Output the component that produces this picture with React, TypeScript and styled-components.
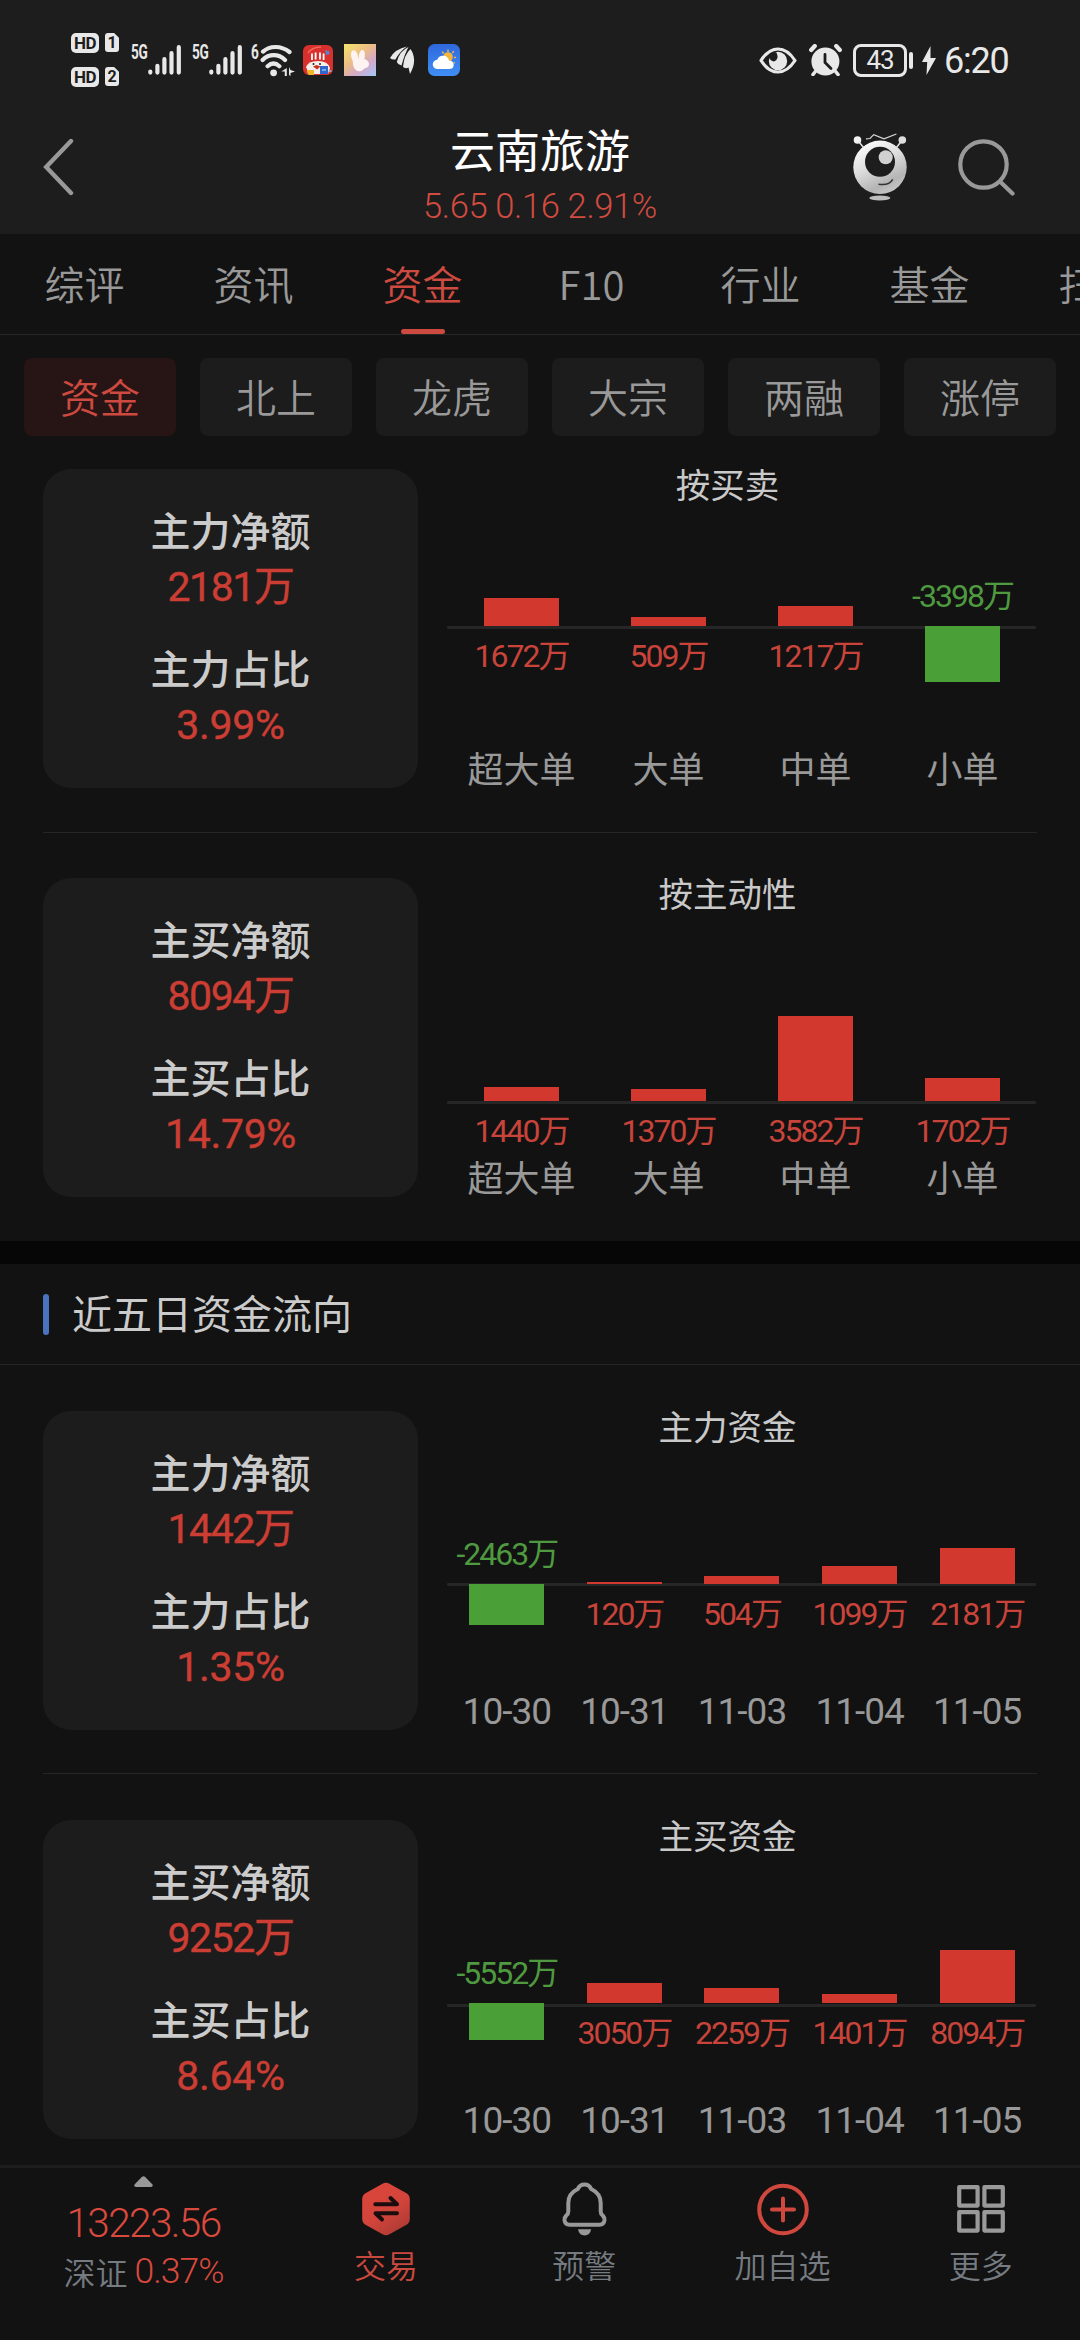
import React from "react";
import styled, { createGlobalStyle, css } from "styled-components";

const RED = "#d2382e";
const RED_SOFT = "#cd4a40";
const GREEN = "#4a9f37";
const GREY = "#999999";
const CJK = `"Noto Sans CJK SC", "Noto Sans", sans-serif`;
const NUM = `Roboto, "Noto Sans CJK SC", sans-serif`;

const GlobalStyle = createGlobalStyle`
  * { box-sizing: border-box; }
  body { margin: 0; background: #121212; }
  svg { display: block; flex: none; }
`;

const Screen = styled.main`
  width: 1080px;
  height: 2340px;
  overflow: hidden;
  display: flex;
  flex-direction: column;
  background: #121212;
  font-family: ${CJK};
  white-space: nowrap;
`;

/* ---------- status bar ---------- */

const StatusBar = styled.div`
  height: 120px;
  flex: none;
  display: flex;
  justify-content: space-between;
  padding: 0 72px 0 71px;
  background: #1d1d1d;
  color: #e8e8e8;
`;

const StatusGroup = styled.div`
  display: flex;
  align-items: center;
`;

const SimList = styled.div`
  display: flex;
  flex-direction: column;
  gap: 14px;
  width: 60px;
`;

const SimRow = styled.div`
  display: flex;
  gap: 6px;
  height: 20px;
`;

const Hd = styled.span`
  width: 28px;
  height: 20px;
  border-radius: 5px;
  background: #e8e8e8;
  color: #1d1d1d;
  font: 700 17px/21px ${NUM};
  letter-spacing: -0.5px;
  text-align: center;
`;

const Sim = styled.span`
  width: 14px;
  height: 19px;
  border-radius: 3px;
  clip-path: polygon(0 0, 65% 0, 100% 25%, 100% 100%, 0 100%);
  background: #e8e8e8;
  color: #1d1d1d;
  font: 700 16px/20px ${NUM};
  text-align: center;
`;

const NetLabel = styled.span<{ $w: number }>`
  width: ${(p) => p.$w}px;
  height: 32px;
  font: 700 20px/16px ${NUM};
  letter-spacing: -0.5px;
  & > span {
    display: block;
    transform: scaleX(0.68);
    transform-origin: left;
  }
`;

const IconSlot = styled.span<{ $left: number }>`
  margin-left: ${(p) => p.$left}px;
`;

const Battery = styled.span`
  width: 54px;
  height: 33px;
  margin-left: 11px;
  border: 3.5px solid #e8e8e8;
  border-radius: 8px;
  font: 400 26px/27px ${NUM};
  letter-spacing: -1px;
  text-align: center;
`;

const BatteryNub = styled.span`
  width: 4px;
  height: 17px;
  margin: 0 9px 0 2px;
  border-radius: 2px;
  background: #e8e8e8;
`;

const Clock = styled.span`
  margin-left: 8px;
  width: 64px;
  font: 400 36px/38px ${NUM};
  letter-spacing: -1.2px;
  padding-top: 2px;
`;

/* ---------- title bar ---------- */

const TitleBar = styled.header`
  height: 114px;
  flex: none;
  display: grid;
  grid-template-columns: 1fr auto 1fr;
  padding: 2px 65px 0 43px;
  background: #1d1d1d;
`;

const TitleSide = styled.div<{ $end?: boolean }>`
  height: 90px;
  display: flex;
  align-items: center;
  justify-content: ${(p) => (p.$end ? "flex-end" : "flex-start")};
  gap: 51px;
`;

const TitleBlock = styled.div`
  text-align: center;
  transform: translateX(11px);
`;

const StockName = styled.h1`
  margin: 0;
  font: 400 45px/53px ${CJK};
  color: #ffffff;
`;

const Quote = styled.div`
  font: 300 34.5px/62px ${NUM};
  height: 56px;
  letter-spacing: -0.35px;
  color: #d24b41;
`;

/* ---------- tabs ---------- */

const Tabs = styled.nav`
  height: 101px;
  flex: none;
  display: flex;
  border-bottom: 1px solid #262626;
  overflow: hidden;
`;

const Tab = styled.span<{ $active?: boolean }>`
  width: 169px;
  flex: none;
  display: flex;
  flex-direction: column;
  align-items: center;
  font: 350 40px/98px ${CJK};
  color: ${(p) => (p.$active ? RED_SOFT : GREY)};
  ${(p) =>
    p.$active &&
    css`
      &::after {
        content: "";
        width: 44px;
        height: 6px;
        margin-top: -3px;
        border-radius: 3px;
        background: ${RED_SOFT};
      }
    `}
`;

const Chips = styled.div`
  flex: none;
  display: flex;
  gap: 24px;
  padding: 23px 24px 33px;
`;

const Chip = styled.button<{ $active?: boolean }>`
  width: 152px;
  height: 78px;
  padding: 0 0 3px;
  border: 0;
  border-radius: 8px;
  background: ${(p) => (p.$active ? "#271414" : "#1c1c1c")};
  color: ${(p) => (p.$active ? RED_SOFT : GREY)};
  font: 350 40px/74px ${CJK};
`;

/* ---------- capital blocks ---------- */

const Block = styled.section<{ $bottom: number; $line?: boolean }>`
  flex: none;
  display: flex;
  margin: 0 43px;
  padding-bottom: ${(p) => p.$bottom}px;
  border-bottom: ${(p) => (p.$line ? "1px solid #262626" : "0")};
`;

const Spacer = styled.div<{ $h: number }>`
  flex: none;
  height: ${(p) => p.$h}px;
`;

const SummaryCard = styled.div`
  width: 375px;
  height: 319px;
  padding-top: 32px;
  border-radius: 28px;
  background: #1c1c1c;
  text-align: center;
`;

const SummaryName = styled.div`
  font: 500 40px/56px ${CJK};
  height: 55px;
  color: #cbcbcb;
`;

const SummaryValue = styled.div<{ $pct: boolean }>`
  margin-bottom: 28px;
  font: 400 41px/62px ${NUM};
  height: 55px;
  letter-spacing: ${(p) => (p.$pct ? "-0.3px" : "-1.4px")};
  -webkit-text-stroke: 0.4px #cc3d33;
  color: #cc3d33;
`;

const Chart = styled.div`
  flex: 1;
  height: 319px;
  display: flex;
  flex-direction: column;
`;

const ChartTitle = styled.h3`
  height: 32px;
  margin: 0;
  font: 400 34.5px/28px ${CJK};
  color: #c9c9c9;
  text-align: center;
`;

const Plot = styled.div<{ $base: number; $line: number }>`
  position: relative;
  height: 251px;
  margin: 0 1px 0 30px;
  display: flex;
  &::before {
    content: "";
    position: absolute;
    left: -1px;
    right: 0;
    top: ${(p) => p.$base + p.$line}px;
    height: 3px;
    border-radius: 1px;
    background: #262626;
  }
`;

const Column = styled.div<{ $base: number }>`
  position: relative;
  flex: 1 1 0;
  min-width: 0;
  display: grid;
  grid-template-rows: ${(p) => p.$base}px 1fr;
  justify-items: center;
`;

const Bar = styled.div<{ $down?: boolean }>`
  width: 75px;
  align-self: ${(p) => (p.$down ? "start" : "end")};
  background: ${(p) => (p.$down ? GREEN : RED)};
`;

const BarValue = styled.div<{ $down?: boolean }>`
  align-self: ${(p) => (p.$down ? "end" : "start")};
  margin: ${(p) => (p.$down ? "0 0 15px" : "15px 0 0")};
  font: 400 32px/30px ${NUM};
  letter-spacing: -2px;
  color: ${(p) => (p.$down ? "#4f9a40" : "#c8443a")};
`;

const Axis = styled.div`
  height: 36px;
  margin: 0 1px 0 30px;
  display: flex;
`;

const AxisLabel = styled.span<{ $date?: boolean }>`
  flex: 1 1 0;
  min-width: 0;
  text-align: center;
  color: ${GREY};
  font: ${(p) => (p.$date ? `400 37px/36px ${NUM}` : `400 36px/30px ${CJK}`)};
  letter-spacing: ${(p) => (p.$date ? "-1px" : "0")};
`;

const Band = styled.div`
  flex: none;
  height: 23px;
  background: #060606;
`;

const SectionHead = styled.header`
  flex: none;
  height: 101px;
  display: flex;
  align-items: center;
  gap: 23px;
  padding-left: 43px;
  border-bottom: 1px solid #262626;
`;

const Accent = styled.span`
  width: 6px;
  height: 41px;
  border-radius: 3px;
  background: #4a72bd;
`;

const SectionTitle = styled.h2`
  margin: 0;
  font: 400 40px/44px ${CJK};
  padding-bottom: 5px;
  color: #cbcbcb;
`;

/* ---------- bottom bar ---------- */

const BottomBar = styled.footer`
  flex: none;
  height: 175px;
  display: grid;
  grid-template-columns: 287px repeat(4, 1fr);
  border-top: 3px solid #1d1d1d;
  background: #121212;
`;

const IndexCell = styled.div`
  display: flex;
  flex-direction: column;
  align-items: center;
  padding-top: 8px;
`;

const IndexValue = styled.div`
  margin-top: 12px;
  font: 300 40.5px/48px ${NUM};
  letter-spacing: -1.6px;
  color: #d9493e;
`;

const IndexRow = styled.div`
  display: flex;
  align-items: center;
  gap: 7px;
  font: 350 32px/46px ${CJK};
  color: #757b80;
`;

const IndexPct = styled.span`
  font: 300 35.5px/48px ${NUM};
  letter-spacing: -1px;
  color: #d9493e;
`;

const Action = styled.div<{ $hot?: boolean }>`
  display: flex;
  flex-direction: column;
  align-items: center;
  font: 350 32px/40px ${CJK};
  color: ${(p) => (p.$hot ? "#c9493f" : "#757b80")};
`;

const ActionIcon = styled.span`
  height: 76px;
  padding-top: 14px;
  display: flex;
  align-items: flex-start;
`;

/* ---------- icons ---------- */

const Signal = () => (
  <svg width="34" height="32" viewBox="0 0 34 32" stroke="#e8e8e8" strokeWidth="4.2" strokeLinecap="round">
    <path d="M2.3 27.6v1M9.4 21.8v6.8M16.4 15.2v13.4M23.5 9.2v19.4M30.8 3.2v25.4" />
  </svg>
);

const Wifi = () => (
  <svg width="36" height="33" viewBox="0 0 36 33" fill="none" stroke="#e8e8e8" strokeWidth="4.2" strokeLinecap="round">
    <path d="M3 7.600C10 1.400 21 1.400 29.500 8M2.600 16C9 9.600 18.500 9.600 25 16M7.600 22.200c3.800-3.400 8-3.400 11.800 0" />
    <circle cx="13.600" cy="28.800" r="3.400" fill="#e8e8e8" stroke="none" />
    <path d="M26.800 24v8h-2v-4.500h-3.500zM29 23v8l1.500 1v-3l4.500-1.500-4.500-1.500z" fill="#e8e8e8" stroke="none" />
  </svg>
);

const SaleApp = () => (
  <svg width="30" height="30" viewBox="0 0 30 30">
    <rect width="30" height="30" rx="6" fill="#d8302c" />
    <path d="M5 8q4-6 13-6" fill="none" stroke="#f0685c" strokeWidth="1.400" />
    <path d="M3 22q2-6 12-6t12 7l-2 6H6z" fill="#f5efe9" />
    <path d="M9 8.500v6.500M12.600 7.500v7M17 7.500v7M20.600 8.500v6.500" stroke="#fff" strokeWidth="1.800" />
    <path d="M22.500 5.500l3.500 3.500M23 9.500l3-3" stroke="#4b8ad8" strokeWidth="1.800" />
    <path d="M10 21.500l3.500-1.500 4 1.500-3.400 3z" fill="#c93023" />
    <circle cx="10.500" cy="19" r="1" fill="#222" />
    <circle cx="17" cy="19" r="1" fill="#222" />
    <path d="M4 25h7v5H6q-2-1-2-5z" fill="#f3b52e" />
    <path d="M17 21h8v8h-8z" fill="#2f66cf" />
    <path d="M19 25h4M25.500 26h3" stroke="#86c5e8" strokeWidth="1.500" />
  </svg>
);

const RabbitApp = () => (
  <svg width="32" height="32" viewBox="0 0 32 32">
    <defs>
      <linearGradient id="rab" x1="0.100" y1="0" x2="0.900" y2="1">
        <stop offset="0" stopColor="#f3e06e" />
        <stop offset="0.400" stopColor="#ecbd85" />
        <stop offset="0.700" stopColor="#d3a9c9" />
        <stop offset="1" stopColor="#a8c3f2" />
      </linearGradient>
    </defs>
    <rect width="32" height="32" fill="url(#rab)" />
    <g fill="#fdf3f2">
      <ellipse cx="10.600" cy="12.500" rx="3.400" ry="6.500" transform="rotate(-14 10.600 12.500)" />
      <ellipse cx="17.800" cy="12" rx="3" ry="6" transform="rotate(8 17.800 12)" />
      <path d="M8.600 15q6-1 10.400-.5 6 1.500 6 5.500 0 3.500-4.500 4.500-3 3.500-7 2.500-3-1-4.500-6z" />
    </g>
  </svg>
);

const Feather = () => (
  <svg width="25" height="28" viewBox="0 0 25 28" fill="#e8e8e8">
    <path d="M0 12Q5 3 17 .5Q10 5 5.500 13.500Q2 14 0 12Z" />
    <path d="M6.800 16Q9.500 5 18.500 1Q15 7 11.500 19.500Q8 19 6.800 16Z" />
    <path d="M13 21Q14 9 20.500 3Q28 14 20 28L18.500 21.500Q15.500 23 13 21Z" />
  </svg>
);

const Weather = () => (
  <svg width="32" height="32" viewBox="0 0 32 32">
    <defs>
      <linearGradient id="wea" x1="0" y1="0" x2="0" y2="1">
        <stop offset="0" stopColor="#2e68dd" />
        <stop offset="1" stopColor="#3f8ff5" />
      </linearGradient>
    </defs>
    <rect width="32" height="32" rx="6.500" fill="url(#wea)" />
    <g stroke="#f3bd4e" strokeWidth="1.300" strokeLinecap="round">
      <path d="M20 6v1.500M14.500 8l.8 1M25.500 7.500l-.8 1M26.500 13.500h1M26 18.500l.5.400" />
    </g>
    <circle cx="20" cy="13" r="4.800" fill="#f5b53c" />
    <path d="M9.500 25a4.600 4.600 0 0 1-.3-9.200 6.200 6.200 0 0 1 11.800.6q4.700.5 4.700 4.400 0 4.200-4.500 4.200z" fill="#fff" />
  </svg>
);

const Eye = () => (
  <svg width="38" height="27" viewBox="0 0 38 27">
    <path d="M2 13.500Q9.500 2 19 2T36 13.500Q28.500 25 19 25T2 13.500Z" fill="none" stroke="#e8e8e8" strokeWidth="3.200" strokeLinejoin="round" />
    <circle cx="19" cy="14" r="9.200" fill="#e8e8e8" />
    <path d="M9.500 9Q14 3.500 17.500 5.500Q20.500 12.500 15 14.500Q11 14 9.500 9Z" fill="#1d1d1d" />
  </svg>
);

const Alarm = () => (
  <svg width="33" height="32" viewBox="0 0 33 32">
    <circle cx="16.400" cy="17.500" r="14" fill="#e8e8e8" />
    <path d="M2.200 6l3.600-4M30.800 6l-3.600-4" stroke="#e8e8e8" strokeWidth="4.200" strokeLinecap="round" />
    <path d="M6 28l-2 2.500M27 28l2 2.500" stroke="#e8e8e8" strokeWidth="3.600" strokeLinecap="round" />
    <path d="M16 10.500v8l6 6" fill="none" stroke="#1d1d1d" strokeWidth="2.800" strokeLinecap="round" />
  </svg>
);

const Bolt = () => (
  <svg width="14" height="29" viewBox="0 0 14 29">
    <path d="M8.500 0L0 16h5.200L4.500 29 14 12H8.500z" fill="#e8e8e8" />
  </svg>
);

const Back = () => (
  <svg width="32" height="58" viewBox="0 0 32 58" fill="none" stroke={GREY} strokeWidth="4.400" strokeLinecap="round" strokeLinejoin="miter">
    <path d="M28 3L3.200 29L28 55" />
  </svg>
);

const Robot = () => (
  <svg width="54" height="68" viewBox="0 0 54 68">
    <defs>
      <linearGradient id="bot" x1="0.200" y1="0" x2="0.700" y2="1">
        <stop offset="0" stopColor="#ffffff" />
        <stop offset="0.450" stopColor="#dcdcdc" />
        <stop offset="0.800" stopColor="#b4b4b4" />
        <stop offset="1" stopColor="#c8c8c8" />
      </linearGradient>
    </defs>
    <path d="M13 5.800L17 5.500L20.700 1.700L31 5.800L43.400 1" fill="none" stroke="#d8d8d8" strokeWidth="1.200" />
    <path d="M4.500 7L10.500 14.500M49.300 7L43.500 14.500" stroke="#dcdcdc" strokeWidth="1.600" />
    <circle cx="4.500" cy="7" r="3.800" fill="#f2f2f2" />
    <circle cx="49.300" cy="7" r="3.800" fill="#dedede" />
    <circle cx="27" cy="34.300" r="26.700" fill="url(#bot)" />
    <circle cx="27" cy="28.800" r="15" fill="#1d1d1d" />
    <circle cx="32.700" cy="24.200" r="7" fill="#d0d0d0" />
    <path d="M25.500 51.200Q36 53 39.700 46.300" fill="none" stroke="#333" strokeWidth="1.500" />
    <ellipse cx="26.800" cy="65" rx="10.500" ry="2.400" fill="#bdbdbd" />
  </svg>
);

const Search = () => (
  <svg width="57" height="57" viewBox="0 0 57 57" fill="none" stroke={GREY} strokeWidth="4.200" strokeLinecap="round">
    <circle cx="25.500" cy="25.500" r="23.200" />
    <path d="M42.500 43L54.500 54.500" />
  </svg>
);

const Caret = () => (
  <svg width="19" height="11" viewBox="0 0 19 11">
    <path d="M8 .8Q9.500-.4 11 .8L18.500 8.500Q19.300 11 17 11H2Q-.3 11 .5 8.500Z" fill={GREY} />
  </svg>
);

const Trade = () => (
  <svg width="48" height="54" viewBox="0 0 48 54">
    <defs>
      <linearGradient id="trd" x1="0.200" y1="0" x2="0.800" y2="1">
        <stop offset="0" stopColor="#dc453a" />
        <stop offset="0.550" stopColor="#d2443b" />
        <stop offset="1" stopColor="#a93a34" />
      </linearGradient>
    </defs>
    <path
      d="M20.500 1.700Q24 -.3 27.500 1.700L44.500 11.200Q47.800 13.200 47.800 17V37Q47.800 40.800 44.500 42.700L27.500 52.300Q24 54.300 20.500 52.300L3.500 42.700Q.2 40.800 .2 37V17Q.2 13.200 3.500 11.200Z"
      fill="url(#trd)"
    />
    <path d="M13.300 22.300H35L28.500 16M35 31.200H13.500L20 37.500" fill="none" stroke="#1b0d0d" strokeWidth="4" strokeLinecap="round" strokeLinejoin="round" />
  </svg>
);

const Bell = () => (
  <svg width="45" height="54" viewBox="0 0 45 54">
    <path
      d="M22.500 2.400C19.500 2.400 17 4 15.800 7C9.500 10 6.300 15 6.300 21V29.500Q6.300 32 4.300 33.500Q2.300 35.500 2.500 38Q3 42.700 7.500 42.700H37.500Q42 42.700 42.500 38Q42.700 35.500 40.700 33.500Q38.700 32 38.700 29.500V21C38.700 15 35.500 10 29.200 7C28 4 25.500 2.400 22.500 2.400Z"
      fill="none"
      stroke={GREY}
      strokeWidth="4"
    />
    <path d="M16 47.300H29.200Q28 53.500 22.600 53.500T16 47.300Z" fill={GREY} />
  </svg>
);

const AddCircle = () => (
  <svg width="52" height="54" viewBox="0 0 52 54" fill="none" stroke="#d0473d" strokeWidth="4" strokeLinecap="round">
    <circle cx="26" cy="27.500" r="23.800" />
    <path d="M15 27.500H37M26 16.500V38.500" />
  </svg>
);

const More = () => (
  <svg width="48" height="54" viewBox="0 0 48 54" fill="none" stroke={GREY} strokeWidth="4.200" strokeLinejoin="round">
    <rect x="2.200" y="5.200" width="18.400" height="18.400" />
    <rect x="27.400" y="5.200" width="18.400" height="18.400" />
    <rect x="2.200" y="30.200" width="18.400" height="18.400" />
    <rect x="27.400" y="30.200" width="18.400" height="18.400" />
  </svg>
);

/* ---------- data ---------- */

type Item = { value: string; h: number; label: string };
type BlockData = {
  rows: [string, string][];
  title: string;
  base: number;
  line: number;
  items: Item[];
};

const BY_TRADE: BlockData = {
  rows: [["主力净额", "2181万"], ["主力占比", "3.99%"]],
  title: "按买卖",
  base: 125,
  line: 0,
  items: [
    { value: "1672万", h: 27.7, label: "超大单" },
    { value: "509万", h: 8.7, label: "大单" },
    { value: "1217万", h: 20, label: "中单" },
    { value: "-3398万", h: 56, label: "小单" },
  ],
};

const BY_ACTIVE: BlockData = {
  rows: [["主买净额", "8094万"], ["主买占比", "14.79%"]],
  title: "按主动性",
  base: 191,
  line: 0,
  items: [
    { value: "1440万", h: 14.3, label: "超大单" },
    { value: "1370万", h: 12.3, label: "大单" },
    { value: "3582万", h: 85.3, label: "中单" },
    { value: "1702万", h: 23.3, label: "小单" },
  ],
};

const DAYS = ["10-30", "10-31", "11-03", "11-04", "11-05"];
const daily = (values: [string, number][]): Item[] =>
  values.map(([value, h], i) => ({ value, h, label: DAYS[i] }));

const MAIN_FLOW: BlockData = {
  rows: [["主力净额", "1442万"], ["主力占比", "1.35%"]],
  title: "主力资金",
  base: 141,
  line: -1,
  items: daily([["-2463万", 41], ["120万", 2], ["504万", 8], ["1099万", 18], ["2181万", 36]]),
};

const BUY_FLOW: BlockData = {
  rows: [["主买净额", "9252万"], ["主买占比", "8.64%"]],
  title: "主买资金",
  base: 151,
  line: 1,
  items: daily([["-5552万", 37], ["3050万", 20], ["2259万", 15], ["1401万", 9], ["8094万", 53]]),
};

const CapitalBlock = ({ data, bottom, line }: { data: BlockData; bottom: number; line?: boolean }) => (
  <Block $bottom={bottom} $line={line}>
    <SummaryCard>
      {data.rows.map(([name, value]) => (
        <React.Fragment key={name}>
          <SummaryName>{name}</SummaryName>
          <SummaryValue $pct={value.endsWith("%")}>{value}</SummaryValue>
        </React.Fragment>
      ))}
    </SummaryCard>
    <Chart>
      <ChartTitle>{data.title}</ChartTitle>
      <Plot $base={data.base} $line={data.line}>
        {data.items.map((it) => {
          const down = it.value.startsWith("-");
          const bar = <Bar $down={down} style={{ height: it.h }} />;
          const text = <BarValue $down={down}>{it.value}</BarValue>;
          return (
            <Column key={it.label} $base={data.base}>
              {down ? text : bar}
              {down ? bar : text}
            </Column>
          );
        })}
      </Plot>
      <Axis>
        {data.items.map((it) => (
          <AxisLabel key={it.label} $date={it.label.includes("-")}>
            {it.label}
          </AxisLabel>
        ))}
      </Axis>
    </Chart>
  </Block>
);

const TABS = ["综评", "资讯", "资金", "F10", "行业", "基金", "扫雷"];
const CHIPS = ["资金", "北上", "龙虎", "大宗", "两融", "涨停"];

export default function App() {
  return (
    <Screen>
      <GlobalStyle />
      <StatusBar>
        <StatusGroup>
          <SimList>
            <SimRow><Hd>HD</Hd><Sim>1</Sim></SimRow>
            <SimRow><Hd>HD</Hd><Sim>2</Sim></SimRow>
          </SimList>
          <NetLabel $w={17}><span>5G</span></NetLabel>
          <Signal />
          <IconSlot $left={10} />
          <NetLabel $w={17}><span>5G</span></NetLabel>
          <Signal />
          <IconSlot $left={8} />
          <NetLabel $w={9}><span>6</span></NetLabel>
          <Wifi />
          <IconSlot $left={7}><SaleApp /></IconSlot>
          <IconSlot $left={11}><RabbitApp /></IconSlot>
          <IconSlot $left={14}><Feather /></IconSlot>
          <IconSlot $left={13}><Weather /></IconSlot>
        </StatusGroup>
        <StatusGroup>
          <Eye />
          <IconSlot $left={12}><Alarm /></IconSlot>
          <Battery>43</Battery>
          <BatteryNub />
          <Bolt />
          <Clock>6:20</Clock>
        </StatusGroup>
      </StatusBar>

      <TitleBar>
        <TitleSide><Back /></TitleSide>
        <TitleBlock>
          <StockName>云南旅游</StockName>
          <Quote>5.65 0.16 2.91%</Quote>
        </TitleBlock>
        <TitleSide $end>
          <Robot />
          <Search />
        </TitleSide>
      </TitleBar>

      <Tabs>
        {TABS.map((t) => (
          <Tab key={t} $active={t === "资金"}>{t}</Tab>
        ))}
      </Tabs>
      <Chips>
        {CHIPS.map((c) => (
          <Chip key={c} $active={c === "资金"}>{c}</Chip>
        ))}
      </Chips>

      <CapitalBlock data={BY_TRADE} bottom={44} line />
      <Spacer $h={45} />
      <CapitalBlock data={BY_ACTIVE} bottom={44} />
      <Band />
      <SectionHead>
        <Accent />
        <SectionTitle>近五日资金流向</SectionTitle>
      </SectionHead>
      <Spacer $h={46} />
      <CapitalBlock data={MAIN_FLOW} bottom={43} line />
      <Spacer $h={46} />
      <CapitalBlock data={BUY_FLOW} bottom={26} />

      <BottomBar>
        <IndexCell>
          <Caret />
          <IndexValue>13223.56</IndexValue>
          <IndexRow>
            深证<IndexPct>0.37%</IndexPct>
          </IndexRow>
        </IndexCell>
        <Action $hot><ActionIcon><Trade /></ActionIcon>交易</Action>
        <Action><ActionIcon><Bell /></ActionIcon>预警</Action>
        <Action><ActionIcon><AddCircle /></ActionIcon>加自选</Action>
        <Action><ActionIcon><More /></ActionIcon>更多</Action>
      </BottomBar>
    </Screen>
  );
}
